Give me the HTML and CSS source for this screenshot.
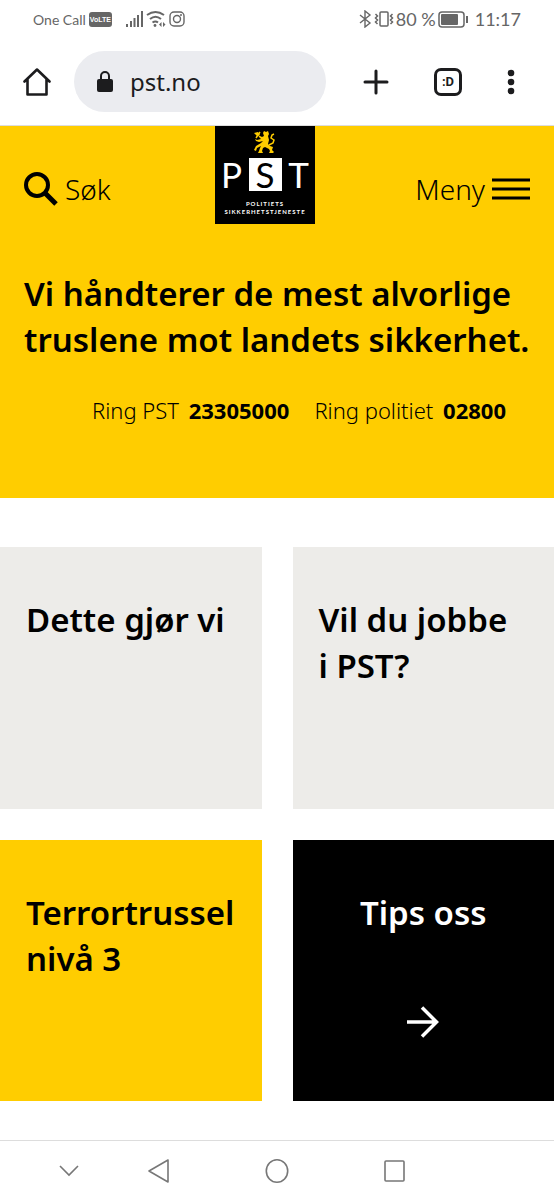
FILE: index.html
```html
<!DOCTYPE html>
<html lang="no">
<head>
    <meta charset="UTF-8">
    <meta name="viewport" content="width=device-width, initial-scale=1.0">
    <title>PST</title>
    <link rel="stylesheet" href="styles.css">
</head>
<body>
    <div class="status-bar">
        <div class="status-left">
            <span>One Call</span>
            <span class="volte">VoLTE</span>
            <svg class="signal" width="18" height="18" viewBox="0 0 18 18" stroke="#666" stroke-width="2">
                <path d="M2 17v-3M6 17v-6M9.500 17V8M13 17V5M17 17V1"/>
            </svg>
            <svg width="20" height="18" viewBox="0 0 20 18" fill="none" stroke="#666" stroke-width="2">
                <path d="M1 5q8.500-6 17 0M4 9q5.500-4.500 11 0M6.500 12.500q3-2 5.500 0"/>
                <circle cx="9" cy="15.500" r="1.400" fill="#666" stroke="none"/>
                <path d="M13 14.500l2.500-2.500v5zM19.500 14.500L17 12v5z" fill="#666" stroke="none"/>
            </svg>
            <svg width="16" height="16" viewBox="0 0 16 16" fill="none" stroke="#666" stroke-width="1.400">
                <rect x="1" y="1" width="14" height="14" rx="4"/>
                <circle cx="8" cy="8" r="3.500"/>
                <circle cx="12" cy="4" r="1" fill="#666" stroke="none"/>
            </svg>
        </div>
        <div class="status-right">
            <svg width="13" height="18" viewBox="0 0 13 18" fill="none" stroke="#666" stroke-width="1.400">
                <path d="M1 5l10 8-5 4V1l5 4-10 8"/>
            </svg>
            <svg width="20" height="18" viewBox="0 0 20 18" fill="none" stroke="#666" stroke-width="1.500">
                <rect x="6" y="2" width="8" height="14" rx="1"/>
                <path d="M1.500 4l2 2-2 2 2 2-2 2 2 2M18.500 4l-2 2 2 2-2 2 2 2-2 2"/>
            </svg>
            <span>80 %</span>
            <svg class="battery" width="31" height="17" viewBox="0 0 31 17" fill="none" stroke="#666">
                <rect x="1" y="1" width="25" height="15" rx="3" stroke-width="1.500"/>
                <rect x="3" y="3" width="17" height="11" rx="1" fill="#666" stroke="none"/>
                <path d="M29 5v7" stroke-width="2"/>
            </svg>
            <span>11:17</span>
        </div>
    </div>

    <div class="browser-bar">
        <button class="icon-btn" aria-label="Hjem">
            <svg width="28" height="28" viewBox="0 0 28 28" fill="none" stroke="#1c1c1e" stroke-width="2.600" stroke-linejoin="round" stroke-linecap="round">
                <path d="M1.500 13.500L14 1.500l12.500 12M4.500 11v15.500h19V11"/>
            </svg>
        </button>
        <label class="address">
            <svg width="18" height="22" viewBox="0 0 18 22">
                <rect x="1" y="8" width="16" height="13" rx="2" fill="#1c1c1e"/>
                <path d="M5 9V5a4 4 0 0 1 8 0v4" fill="none" stroke="#1c1c1e" stroke-width="2"/>
            </svg>
            <input type="text" value="pst.no" aria-label="Adresse">
        </label>
        <div class="browser-actions">
            <button class="icon-btn" aria-label="Ny fane">
                <svg width="26" height="26" viewBox="0 0 26 26" stroke="#1c1c1e" stroke-width="3" stroke-linecap="round">
                    <path d="M13 2v22M2 13h22"/>
                </svg>
            </button>
            <button class="icon-btn tabs" aria-label="Faner">:D</button>
            <button class="icon-btn" aria-label="Mer">
                <svg width="8" height="26" viewBox="0 0 8 26" fill="#1c1c1e">
                    <circle cx="4" cy="4" r="3.300"/>
                    <circle cx="4" cy="13" r="3.300"/>
                    <circle cx="4" cy="22" r="3.300"/>
                </svg>
            </button>
        </div>
    </div>

    <header class="hero">
        <div class="top-nav">
            <button class="nav-btn">
                <svg width="34" height="34" viewBox="0 0 34 34" fill="none" stroke="#000">
                    <circle cx="13" cy="13" r="11" stroke-width="4"/>
                    <path d="M21 21l11 11" stroke-width="5"/>
                </svg>
                Søk
            </button>
            <a class="logo" href="#" aria-label="Politiets sikkerhetstjeneste">
                <svg class="lion" width="24" height="24" viewBox="0 0 24 24" fill="#ffcd00">
                    <path d="M10 3l1-2 2 1 2-1 1 3-1 2 1 4-1 4 2 2 3 1-1 3 2 2-1 1h-4l1-2-1-2-4-2-2 1-1 3 1 2H5l1-2 1-3 1-2-4 2-1 3-2-1 2-4 5-3 2-2-4 1-3-1-1-2 2 1 4-1-2-2-1-2 2 1 2 1 2-1z"/>
                    <path d="M16 15l4-2 1-3-3-2 1-3 2-1M3 8l4-6" fill="none" stroke="#ffcd00" stroke-width="1.500"/>
                    <path d="M1 3l4-1 2 3-3 1z"/>
                </svg>
                <span class="logo-letters"><span>P</span><span class="boxed">S</span><span>T</span></span>
                <span class="logo-name">POLITIETS<br>SIKKERHETSTJENESTE</span>
            </a>
            <button class="nav-btn">
                Meny
                <svg width="38" height="22" viewBox="0 0 38 22" stroke="#000" stroke-width="3">
                    <path d="M0 2h38M0 11h38M0 20h38"/>
                </svg>
            </button>
        </div>
        <h1>Vi håndterer de mest alvorlige truslene mot landets sikkerhet.</h1>
        <div class="phones">
            <a href="tel:23305000">Ring PST <strong>23305000</strong></a>
            <a href="tel:02800">Ring politiet <strong>02800</strong></a>
        </div>
    </header>

    <main class="cards">
        <a class="card" href="#"><h2>Dette gjør vi</h2></a>
        <a class="card" href="#"><h2>Vil du jobbe i&nbsp;PST?</h2></a>
        <a class="card yellow" href="#"><h2>Terrortrussel nivå 3</h2></a>
        <a class="card black" href="#">
            <h2>Tips oss</h2>
            <svg width="32" height="32" viewBox="0 0 32 32" fill="none" stroke="#fff" stroke-width="3.500">
                <path d="M0 16h29M15 1.500L29.500 16 15 30.500"/>
            </svg>
        </a>
    </main>

    <nav class="system-nav">
        <button class="icon-btn" aria-label="Skjul">
            <svg width="20" height="12" viewBox="0 0 20 12" fill="none" stroke="#777" stroke-width="1.600"><path d="M1 1l9 9 9-9"/></svg>
        </button>
        <button class="icon-btn" aria-label="Tilbake">
            <svg width="22" height="26" viewBox="0 0 22 26" fill="none" stroke="#777" stroke-width="1.600" stroke-linejoin="round"><path d="M20 2v22L1 13z"/></svg>
        </button>
        <button class="icon-btn" aria-label="Hjem">
            <svg width="24" height="26" viewBox="0 0 24 26" fill="none" stroke="#777" stroke-width="1.600"><ellipse cx="12" cy="13" rx="10.700" ry="11.300"/></svg>
        </button>
        <button class="icon-btn" aria-label="Oversikt">
            <svg width="22" height="24" viewBox="0 0 22 24" fill="none" stroke="#777" stroke-width="1.600"><rect x="1" y="2" width="19" height="20" rx="1"/></svg>
        </button>
    </nav>
</body>
</html>
```
FILE: styles.css
```css
* {
    margin: 0;
    padding: 0;
    box-sizing: border-box;
}

body {
    min-height: 100vh;
    display: flex;
    flex-direction: column;
    background-color: #fff;
    color: #000;
    font-family: "Noto Sans", "Liberation Sans", sans-serif;
}

button, input {
    font: inherit;
    color: inherit;
    border: none;
    background: none;
}

button {
    cursor: pointer;
}

a {
    color: inherit;
    text-decoration: none;
}

svg {
    display: block;
    flex-shrink: 0;
}

.status-bar {
    height: 38px;
    padding: 0 33px;
    display: flex;
    justify-content: space-between;
    align-items: center;
    color: #666;
    font-family: Lato, sans-serif;
}

.status-left, .status-right {
    display: flex;
    align-items: center;
    gap: 3px;
    font-size: 14px;
}

.status-right {
    gap: 2px;
    font-size: 18px;
}

.volte {
    padding: 0 1px;
    border-radius: 3px;
    background-color: #666;
    color: #fff;
    font-family: "Liberation Sans", sans-serif;
    font-size: 7px;
    font-weight: 700;
    line-height: 15px;
}

.signal {
    margin-left: 10px;
}

.battery {
    margin-right: 4px;
}

.browser-bar {
    height: 88px;
    padding: 0 39px 0 23px;
    display: flex;
    align-items: center;
    border-bottom: 1px solid #ddd;
    color: #1c1c1e;
}

.icon-btn {
    display: flex;
    align-items: center;
    justify-content: center;
}

.address {
    flex: 1;
    height: 61px;
    min-width: 0;
    margin-left: 23px;
    padding: 0 22px;
    display: flex;
    align-items: center;
    gap: 16px;
    border-radius: 31px;
    background-color: #ebecf0;
}

.address input {
    width: 100%;
    min-width: 0;
    font-size: 24px;
}

.browser-actions {
    margin-left: 37px;
    display: flex;
    align-items: center;
    gap: 45px;
}

.tabs {
    width: 28px;
    height: 28px;
    border: 3px solid #1c1c1e;
    border-radius: 7px;
    font-family: Roboto, sans-serif;
    font-size: 13px;
    font-weight: 700;
}

.hero {
    padding: 0 24px 74px;
    background-color: #ffcd00;
}

.top-nav {
    display: grid;
    grid-template-columns: 1fr 100px 1fr;
    align-items: center;
}

.nav-btn {
    height: 36px;
    margin-top: 28px;
    display: flex;
    align-items: center;
    gap: 7px;
    font-size: 28px;
    font-weight: 300;
}

.nav-btn:last-child {
    justify-self: end;
}

.logo {
    margin-left: -24px;
    height: 98px;
    justify-self: center;
    width: 100px;
    padding-top: 4px;
    display: flex;
    flex-direction: column;
    align-items: center;
    background-color: #000;
    color: #fff;
    font-family: Lato, sans-serif;
}

.logo-letters {
    margin-top: 4px;
    display: flex;
    gap: 6px;
    font-size: 35px;
    line-height: 33px;
}

.logo-letters span {
    width: 22px;
    text-align: center;
}

.logo-letters .boxed {
    width: 33px;
    background-color: #fff;
    color: #000;
}

.logo-name {
    margin-top: 9px;
    font-size: 6px;
    font-weight: 700;
    line-height: 8px;
    letter-spacing: 1px;
    text-align: center;
}

h1 {
    margin-top: 47px;
    margin-right: -16px;
    font-size: 33px;
    font-weight: 600;
    line-height: 46px;
}

.phones {
    margin-top: 33px;
    padding-right: 24px;
    display: flex;
    justify-content: flex-end;
    gap: 25px;
    font-size: 22px;
    font-weight: 300;
    line-height: 28px;
}

.phones strong {
    margin-left: 4px;
    font-weight: 700;
}

.cards {
    margin-top: 49px;
    display: grid;
    grid-template-columns: repeat(2, minmax(0, 1fr));
    gap: 31px;
}

.card {
    aspect-ratio: 1;
    padding: 50px 26px;
    background-color: #edece9;
}

.card h2 {
    font-size: 33px;
    font-weight: 600;
    line-height: 46px;
}

.yellow {
    background-color: #ffcd00;
}

.black {
    display: flex;
    flex-direction: column;
    align-items: center;
    gap: 70px;
    background-color: #000;
    color: #fff;
}

.system-nav {
    height: 60px;
    margin-top: auto;
    padding: 0 57px;
    display: grid;
    grid-template-columns: 90px 118px 118px 24px;
    justify-items: start;
    align-items: center;
    border-top: 1px solid #ddd;
}

.system-nav .icon-btn {
    width: 24px;
}
```
